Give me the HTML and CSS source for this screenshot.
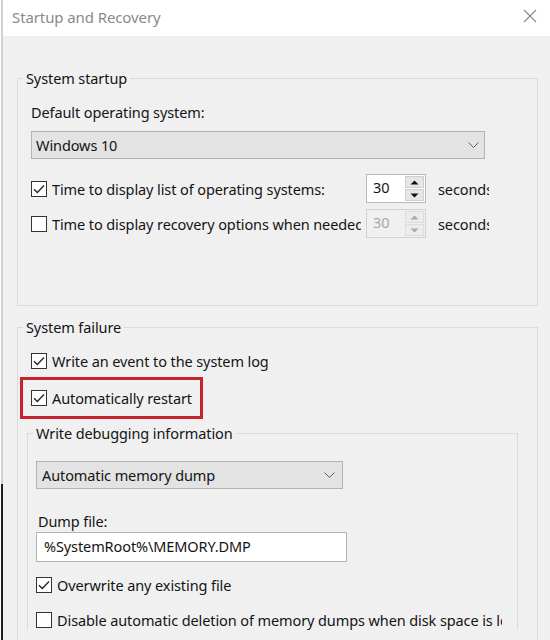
FILE: index.html
```html
<!DOCTYPE html>
<html>
<head>
<meta charset="utf-8">
<link rel="stylesheet" href="styles.css">
</head>
<body>
<div class="window">
  <div class="titlebar">
    <span class="title">Startup and Recovery</span>
    <svg class="close" width="14" height="14" viewBox="0 0 14 14"><path d="M1 1 L13 13 M13 1 L1 13" stroke="#8c8c8c" stroke-width="1.2" fill="none"/></svg>
  </div>
  <div class="client">
    <fieldset class="group g1">
      <legend>System startup</legend>
      <div class="label">Default operating system:</div>
      <div class="select wide">
        <span>Windows 10</span>
        <svg class="chev" width="11" height="6" viewBox="0 0 11 6"><path d="M0.5 0.5 L5.5 5.5 L10.5 0.5" stroke="#606060" stroke-width="1" fill="none"/></svg>
      </div>
      <div class="timerow r1">
        <span class="cb checked"><svg width="16" height="16" viewBox="0 0 16 16"><path d="M3 8.2 L6.3 11.5 L13 4.5" stroke="#222" stroke-width="1.3" fill="none"/></svg></span>
        <span class="tlabel">Time to display list of operating systems:</span>
        <div class="spin">
          <span class="val">30</span>
          <span class="btns">
            <span class="b"><svg width="9" height="5" viewBox="0 0 9 5"><path d="M0.5 4.5 L4.5 0.5 L8.5 4.5 Z" fill="#111"/></svg></span>
            <span class="b"><svg width="9" height="5" viewBox="0 0 9 5"><path d="M0.5 0.5 L4.5 4.5 L8.5 0.5 Z" fill="#111"/></svg></span>
          </span>
        </div>
        <span class="secs">seconds</span>
      </div>
      <div class="timerow r2">
        <span class="cb"></span>
        <span class="tlabel">Time to display recovery options when needed</span>
        <div class="spin disabled">
          <span class="val">30</span>
          <span class="btns">
            <span class="b"><svg width="9" height="5" viewBox="0 0 9 5"><path d="M0.5 4.5 L4.5 0.5 L8.5 4.5 Z" fill="#a8a8a8"/></svg></span>
            <span class="b"><svg width="9" height="5" viewBox="0 0 9 5"><path d="M0.5 0.5 L4.5 4.5 L8.5 0.5 Z" fill="#a8a8a8"/></svg></span>
          </span>
        </div>
        <span class="secs">seconds</span>
      </div>
    </fieldset>

    <fieldset class="group g2">
      <legend>System failure</legend>
      <div class="cbrow first">
        <span class="cb checked"><svg width="16" height="16" viewBox="0 0 16 16"><path d="M3 8.2 L6.3 11.5 L13 4.5" stroke="#222" stroke-width="1.3" fill="none"/></svg></span>
        <span>Write an event to the system log</span>
      </div>
      <div class="highlight">
        <span class="cb checked"><svg width="16" height="16" viewBox="0 0 16 16"><path d="M3 8.2 L6.3 11.5 L13 4.5" stroke="#222" stroke-width="1.3" fill="none"/></svg></span>
        <span>Automatically restart</span>
      </div>
      <fieldset class="group g3">
        <legend>Write debugging information</legend>
        <div class="select narrow">
          <span>Automatic memory dump</span>
          <svg class="chev" width="11" height="6" viewBox="0 0 11 6"><path d="M0.5 0.5 L5.5 5.5 L10.5 0.5" stroke="#606060" stroke-width="1" fill="none"/></svg>
        </div>
        <div class="label dump">Dump file:</div>
        <div class="input">%SystemRoot%\MEMORY.DMP</div>
        <div class="cbrow ow">
          <span class="cb checked"><svg width="16" height="16" viewBox="0 0 16 16"><path d="M3 8.2 L6.3 11.5 L13 4.5" stroke="#222" stroke-width="1.3" fill="none"/></svg></span>
          <span>Overwrite any existing file</span>
        </div>
        <div class="cbrow dis">
          <span class="cb"></span>
          <span>Disable automatic deletion of memory dumps when disk space is low</span>
        </div>
      </fieldset>
    </fieldset>
  </div>
</div>
</body>
</html>
```

FILE: styles.css
```css
html, body {
  margin: 0;
  padding: 0;
  background: #ffffff;
  overflow: hidden;
}
body {
  width: 550px;
  height: 640px;
  font-family: "Noto Sans", "Open Sans", sans-serif;
  font-size: 14.5px;
  letter-spacing: -0.1px;
  line-height: 20px;
  color: #141414;
}
.window {
  margin-left: 1px;
  height: 640px;
  border-left: 2px solid #c4c4c4;
  border-image: linear-gradient(to bottom, #d0d0d0 0, #d0d0d0 483px, #1c1c1c 483px, #1c1c1c 640px) 1;
  background: #f0f0f0;
  display: flex;
  flex-direction: column;
  overflow: hidden;
}
.titlebar {
  height: 36px;
  flex: none;
  background: #ffffff;
  display: flex;
  align-items: center;
  justify-content: space-between;
  padding: 0 13px 0 9px;
}
.title {
  color: #8a8a8a;
  font-size: 15px;
  margin-top: -2px;
}
.close {
  margin-top: -4px;
}
.client {
  flex: 1;
  display: flex;
  flex-direction: column;
  padding: 32px 12px 0 14px;
}
.group {
  margin: 0;
  border: 1px solid #dadada;
  padding: 0;
  min-width: 0;
}
.group legend {
  padding: 0 3px;
  margin-left: -8px;
  line-height: 20px;
}
.g1 {
  padding: 14px 13px 67px 13px;
}
.label {
  height: 20px;
}
.select {
  margin-top: 9px;
  height: 28px;
  box-sizing: border-box;
  border: 1px solid #b4b4b4;
  background: #e3e3e3;
  display: flex;
  align-items: center;
  justify-content: space-between;
  padding: 0 5px 0 4px;
}
.select.wide {
  width: 454px;
}
.select.narrow {
  margin-top: 18px;
  width: 307px;
  padding-left: 5px;
  padding-right: 7px;
}
.timerow {
  display: flex;
  align-items: center;
  height: 29px;
  white-space: nowrap;
}
.timerow.r1 {
  margin-top: 15px;
}
.timerow.r2 {
  margin-top: 6px;
}
.cb {
  width: 16px;
  height: 16px;
  box-sizing: border-box;
  border: 1px solid #333333;
  background: #ffffff;
  flex: none;
}
.cb svg {
  display: block;
  margin: -1px;
}
.tlabel {
  margin-left: 5px;
  width: 309px;
  margin-right: 2px;
  overflow: hidden;
  flex: none;
}
.spin {
  margin-left: 3px;
  width: 60px;
  height: 29px;
  box-sizing: border-box;
  border: 1px solid #b9b9b9;
  background: #ffffff;
  display: flex;
  flex: none;
}
.spin .val {
  flex: 1;
  padding-left: 6px;
  line-height: 25px;
}
.spin .btns {
  width: 20px;
  display: flex;
  flex-direction: column;
  padding: 1px 1px 1px 0;
  box-sizing: border-box;
  gap: 1px;
  background: #ffffff;
}
.spin .b {
  flex: 1;
  background: #e6e6e6;
  border: 1px solid #cfcfcf;
  display: flex;
  align-items: center;
  justify-content: center;
}
.spin.disabled {
  background: #f0f0f0;
  border-color: #d2d2d2;
  color: #a6a6a6;
}
.spin.disabled .btns {
  background: #f0f0f0;
}
.spin.disabled .b {
  background: #ececec;
  border-color: #dcdcdc;
}
.secs {
  margin-left: 12px;
  width: 51px;
  overflow: hidden;
  flex: none;
}
.g2 {
  margin-top: 11px;
  flex: 1;
  padding: 14px 13px 0 13px;
  border-bottom: none;
}
.cbrow {
  display: flex;
  align-items: center;
  gap: 5px;
  height: 20px;
  white-space: nowrap;
}
.highlight {
  margin-top: 6px;
  margin-left: -11px;
  width: 183px;
  height: 42px;
  box-sizing: border-box;
  border: 3px solid #c4232f;
  padding-left: 8px;
  display: flex;
  align-items: center;
  gap: 5px;
  white-space: nowrap;
}
.g3 {
  margin: 4px 6px 0 -4px;
  padding: 0 8px 0 8px;
  flex: 1;
  border-bottom: none;
}
.g3 legend {
  margin-left: -3px;
}
.dump {
  margin-top: 22px;
  margin-left: 2px;
}
.input {
  margin-top: 1px;
  width: 311px;
  height: 30px;
  box-sizing: border-box;
  border: 1px solid #b4b4b4;
  background: #ffffff;
  padding-left: 7px;
  line-height: 27px;
}
.cbrow.ow {
  margin-top: 13px;
}
.cbrow.dis {
  margin-top: 15px;
  width: 466px;
  overflow: hidden;
}
```
